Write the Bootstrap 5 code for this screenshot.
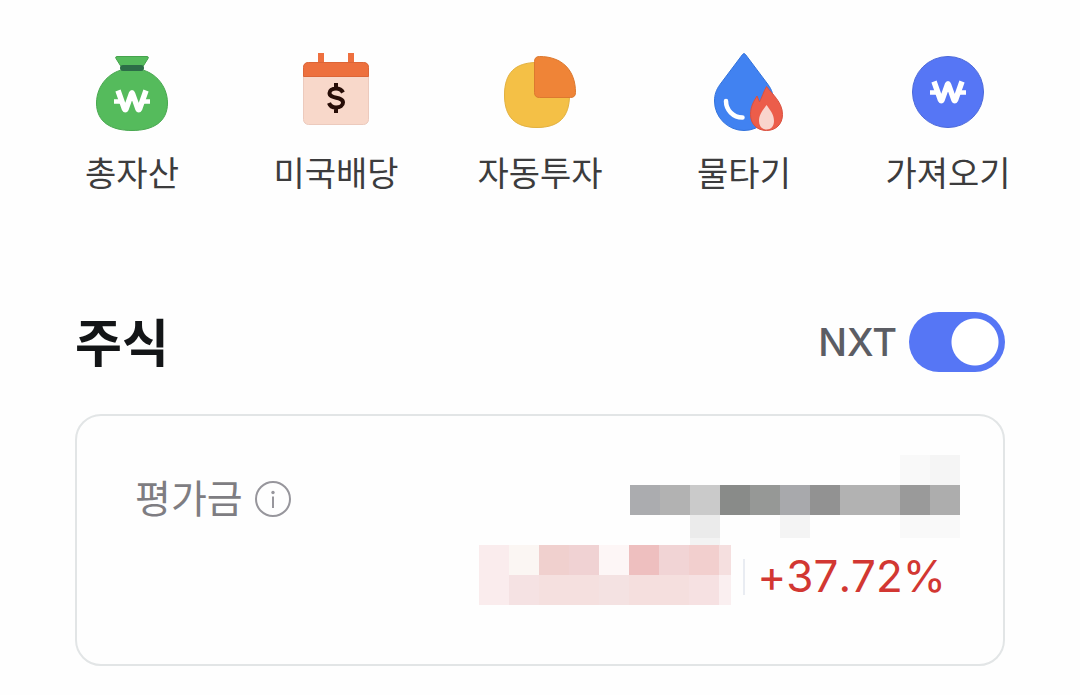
<!DOCTYPE html>
<html lang="ko">
<head>
<meta charset="utf-8">
<meta name="viewport" content="width=device-width, initial-scale=1">
<title>주식</title>
<link href="https://cdn.jsdelivr.net/npm/bootstrap@5.3.0/dist/css/bootstrap.min.css" rel="stylesheet">
<style>
  body { background: #fefefe; font-family: "Noto Sans CJK KR", sans-serif; color: #131517; }
  .shortcuts { padding: 50px 30px 0; }
  .shortcut { gap: 18px; color: #3c3c3d; font-size: 34px; line-height: 40px; white-space: nowrap; }
  .shortcut svg { width: 96px; height: 84px; }
  .stocks { padding: 120px 75px 28px; }
  .stocks-title { padding-bottom: 4px; font-size: 51px; line-height: 56px; }
  .nxt { gap: 12px; min-height: 60px; }
  .nxt label { font: 500 38px/60px Inter, sans-serif; color: #5c5d64; }
  .nxt .form-check-input { width: 96px; height: 60px; margin: 0; float: none; border: 0; border-radius: 30px; background: #d5d7dc; }
  .nxt .form-check-input:checked { background: #5676f5 radial-gradient(circle at calc(100% - 30px) 50%, #fff 23px, transparent 24px); }
  .value-card { margin-top: 42px; border: 2px solid #e2e5e6; border-radius: 26px; background: #fefefe; }
  .value-card .card-body { padding: 39px 43px 59px 58px; }
  .value-label { gap: 11px; margin-top: 19px; font-size: 39px; line-height: 44px; color: #7e7d82; }
  .value-label span { padding-bottom: 6px; }
  .value-label svg { width: 38px; height: 38px; }
  .change { gap: 12px; padding-right: 14px; }
  .split { width: 2px; height: 36px; background: #e9ecf2; }
  .rate { padding-top: 2px; font: 400 44px/58px Inter, sans-serif; font-kerning: none; font-variant-ligatures: no-contextual; color: #d23732; }
</style>
</head>
<body>
<svg width="0" height="0" class="position-absolute" aria-hidden="true">
  <symbol id="won" viewBox="0 0 36 24" overflow="visible">
    <path d="M4 1.500 10.500 20Q11.300 21.500 12 20L17.500 4.500Q18 3 18.500 4.500L24 20Q24.700 21.500 25.500 20L32 1.500" fill="none" stroke="#fff" stroke-width="5.500" stroke-linejoin="round"/>
    <path d="M0 12.500h7M29 12.500h7" stroke="#fff" stroke-width="4.500"/>
  </symbol>
</svg>

<nav class="shortcuts">
  <div class="row row-cols-5 g-0">
    <div class="col"><a href="#" class="shortcut d-flex flex-column align-items-center text-decoration-none">
      <svg viewBox="0 0 96 84" aria-hidden="true">
        <path d="M33 6.500h30q2 0 1 2l-5 8H37l-5-8q-1-2 1-2Z" fill="#55bb5c" stroke="#45a34c"/>
        <path d="M48 18.500c22 0 35.500 17 35.500 34.500C83.500 72 69 80.500 48 80.500S12.500 72 12.500 53C12.500 35.500 26 18.500 48 18.500Z" fill="#55bb5c" stroke="#49a850"/>
        <rect x="36" y="15" width="24" height="6" rx="3" fill="#2c6d47"/>
        <use href="#won" x="30" y="39" width="36" height="24"/>
      </svg><span>총자산</span></a></div>
    <div class="col"><a href="#" class="shortcut d-flex flex-column align-items-center text-decoration-none">
      <svg viewBox="0 0 96 84" aria-hidden="true">
        <path d="M30 3h6v10h-6zM60 3h6v10h-6z" fill="#ee703f"/>
        <rect x="15.500" y="12.500" width="65" height="62" rx="5" fill="#f8d8ca" stroke="#eccabd"/>
        <path d="M15.500 26.500V17.500q0-5 5-5h55q5 0 5 5v9Z" fill="#ed703e" stroke="#dc6537"/>
        <path d="M55 42.500C53.500 39.500 51 38.500 48 38.500c-4 0-6.500 2-6.500 4.500 0 6.500 13.500 3 13.500 9.500 0 3-3 5-7 5-3.500 0-6-1.500-7-4.500M48 33v6M48 57v6" fill="none" stroke="#270d07" stroke-width="4"/>
      </svg><span>미국배당</span></a></div>
    <div class="col"><a href="#" class="shortcut d-flex flex-column align-items-center text-decoration-none">
      <svg viewBox="0 0 96 84" aria-hidden="true">
        <path d="M45 12.500C67 12.500 77.500 23 77.500 45S67 77.500 45 77.500 12.500 67 12.500 45 23 12.500 45 12.500Z" fill="#f4c046" stroke="#e2b140"/>
        <path d="M47.500 6.500C70 6.500 83.500 20 83.500 42.500q0 5-5 5h-31q-5 0-5-5v-31q0-5 5-5Z" fill="#ef8437" stroke="#dc792f"/>
      </svg><span>자동투자</span></a></div>
    <div class="col"><a href="#" class="shortcut d-flex flex-column align-items-center text-decoration-none">
      <svg viewBox="0 0 96 84" aria-hidden="true">
        <path d="M46.500 4.500Q48 2.500 49.500 4.500L72 34.500C76 40 77.500 45 77.500 51A29.500 29.500 0 0 1 18.500 51C18.500 45 20 40 24 34.500Z" fill="#4182f1" stroke="#3373dc"/>
        <path d="M30 51C30 60 37 67.500 46.500 67.500" fill="none" stroke="#fff" stroke-width="4.500" stroke-linecap="round"/>
        <path d="M70.500 36.500C76 44 86.500 52 86.500 64.500 86.500 74 80 80.500 70.500 80.500S54.500 74 54.500 64.500C54.500 56 58 51 61 46L63.500 52C66 47 67.500 42 70.500 36.500Z" fill="#ec5d4a" stroke="#d9503f"/>
        <path d="M70.500 55C74 60 78 64 78 71 78 76 75 79.500 70.500 79.500S63 76 63 71C63 64 67 60 70.500 55Z" fill="#f9d5cd"/>
      </svg><span>물타기</span></a></div>
    <div class="col"><a href="#" class="shortcut d-flex flex-column align-items-center text-decoration-none">
      <svg viewBox="0 0 96 84" aria-hidden="true">
        <circle cx="48" cy="42" r="35.500" fill="#5676f5" stroke="#4b68d9"/>
        <use href="#won" x="30" y="30" width="36" height="24"/>
      </svg><span>가져오기</span></a></div>
  </div>
</nav>

<main class="stocks">
  <div class="d-flex justify-content-between align-items-center">
    <h1 class="stocks-title fw-bold m-0">주식</h1>
    <div class="form-check form-switch nxt d-flex align-items-center p-0 m-0">
      <label for="nxt">NXT</label>
      <input class="form-check-input" type="checkbox" role="switch" id="nxt" checked>
    </div>
  </div>

  <section class="card value-card">
    <div class="card-body d-flex justify-content-between align-items-start">
      <div class="value-label d-flex align-items-center">
        <span>평가금</span>
        <svg viewBox="0 0 38 38" aria-hidden="true">
          <circle cx="19" cy="19" r="17" fill="none" stroke="#97969c" stroke-width="2"/>
          <circle cx="19" cy="12.500" r="1.700" fill="#97969c"/>
          <path d="M19 16.500V28" stroke="#97969c" stroke-width="2"/>
        </svg>
      </div>
      <div class="d-flex flex-column align-items-end">
        <!-- hidden amount -->
        <svg width="330" height="90" shape-rendering="crispEdges" aria-hidden="true">
          <path d="M270 0h30v30h-30z" fill="#f9f9f9"/><path d="M300 0h30v30h-30z" fill="#f5f5f5"/>
          <path d="M0 30h30v30H0z" fill="#abacaf"/><path d="M30 30h30v30H30z" fill="#b2b2b2"/>
          <path d="M60 30h30v30H60z" fill="#cacaca"/><path d="M90 30h30v30H90z" fill="#898b89"/>
          <path d="M120 30h30v30h-30z" fill="#969896"/><path d="M150 30h30v30h-30z" fill="#a8a9ac"/>
          <path d="M180 30h30v30h-30z" fill="#929292"/><path d="M210 30h60v30h-60z" fill="#b2b2b2"/>
          <path d="M270 30h30v30h-30z" fill="#9a9a9a"/><path d="M300 30h30v30h-30z" fill="#adadad"/>
          <path d="M60 60h30v23H60z" fill="#ebebeb"/><path d="M60 83h30v7H60z" fill="#f3f3f3"/>
          <path d="M150 60h30v23h-30z" fill="#f4f4f4"/><path d="M270 60h60v23h-60z" fill="#f9f9f9"/>
        </svg>
        <div class="change d-flex align-items-center">
          <!-- hidden profit -->
          <svg width="252" height="60" shape-rendering="crispEdges" aria-hidden="true">
            <path d="M0 0h30v60H0z" fill="#faeced"/><path d="M30 0h30v30H30z" fill="#fbf6f3"/>
            <path d="M60 0h30v30H60z" fill="#f0d0ce"/><path d="M90 0h30v30H90z" fill="#f0d2d3"/>
            <path d="M120 0h30v30h-30z" fill="#fdf6f6"/><path d="M150 0h30v30h-30z" fill="#eebfbf"/>
            <path d="M180 0h30v30h-30z" fill="#f1d4d5"/><path d="M210 0h30v30h-30z" fill="#f2cfce"/>
            <path d="M240 0h12v30h-12z" fill="#f5dfdf"/><path d="M30 30h30v30H30z" fill="#f5e2e3"/>
            <path d="M60 30h60v30H60z" fill="#f5e0df"/><path d="M120 30h30v30h-30z" fill="#f4e2e2"/>
            <path d="M150 30h60v30h-60z" fill="#f5dfde"/><path d="M210 30h30v30h-30z" fill="#f6e1e2"/>
            <path d="M240 30h12v30h-12z" fill="#faeff0"/>
          </svg>
          <span class="split mt-2 mb-1"></span>
          <span class="rate">+37.72%</span>
        </div>
      </div>
    </div>
  </section>
</main>
<script src="https://cdn.jsdelivr.net/npm/bootstrap@5.3.0/dist/js/bootstrap.bundle.min.js"></script>
</body>
</html>
